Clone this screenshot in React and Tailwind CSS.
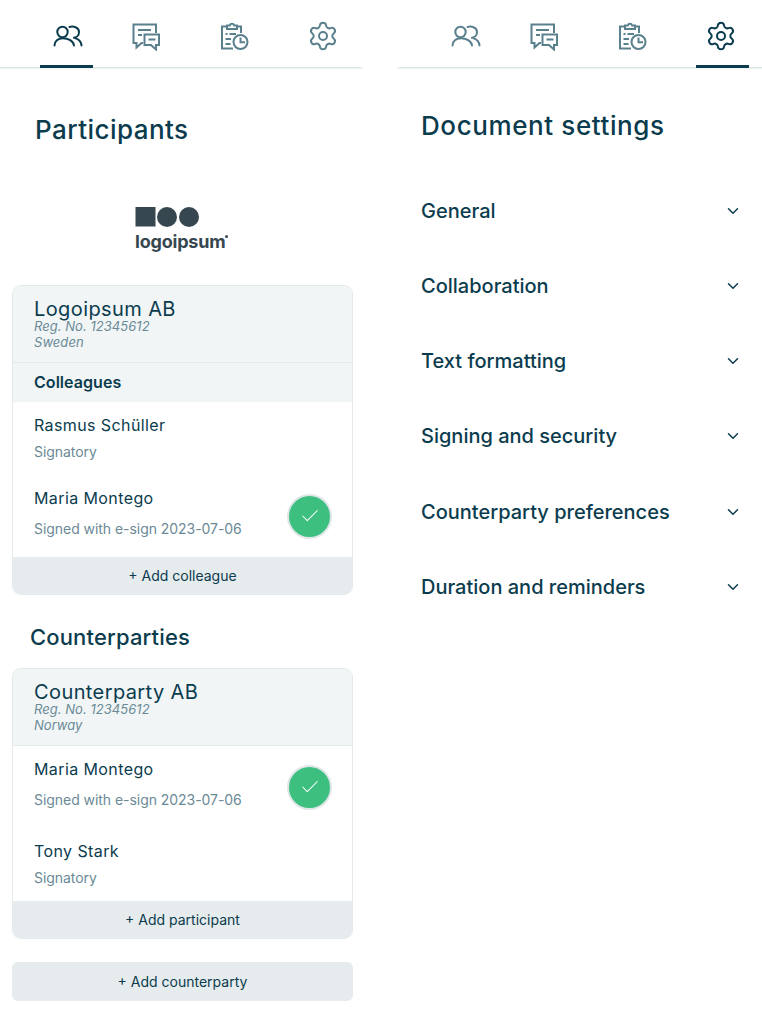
import React from 'react';
import { Settings, ChevronDown, Check } from 'lucide-react';

function PeopleIcon() {
  return (
    <svg width="30" height="24" viewBox="0 0 30 24" fill="none" stroke="currentColor" strokeWidth="2" strokeLinecap="round">
      <circle cx="9.5" cy="8" r="5.2" />
      <path d="M1.5 21.5C1.5 17 5 14.2 10 14.2S20.5 17 21 21.5" />
      <path d="M16.5 3C20 2 26 3 26 8c0 3.6-2.6 5.6-5 5.8" />
      <path d="M22.5 14.4c3.6 1 5.6 3.6 6 7" />
    </svg>
  );
}

function CommentsIcon() {
  return (
    <svg width="32" height="30" viewBox="0 0 32 30" fill="none" stroke="currentColor" strokeWidth="2">
      <path d="M26 12V3.5H3.5V22H6.5V26.5L11.5 22H13" />
      <path d="M8 9H21M8 14H12" />
      <path d="M14.5 13.5H29V24H26V28.5L21 24H14.5Z" />
      <path d="M18.5 18.5H25.5" />
    </svg>
  );
}

function ClipboardIcon() {
  return (
    <svg width="34" height="32" viewBox="0 0 34 32" fill="none" stroke="currentColor" strokeWidth="2">
      <path d="M10 6.5H5V28.5H16" />
      <path d="M20 6.5H24V13" />
      <path d="M10 9H20V5.5H17.2A2.3 2.3 0 0 0 12.8 5.5H10Z" />
      <circle cx="23.5" cy="22" r="7" />
      <path d="M23.5 17.5V22.3H28" />
      <path d="M8.5 14H10.5M12.5 14H19M8.5 19H14M8.5 24H13.5" />
    </svg>
  );
}

function Tabs({ active, lastMargin, gearClass }) {
  const tabs = [
    { icon: <PeopleIcon />, className: 'ml-[40px] pl-[2px]' },
    { icon: <CommentsIcon />, className: 'ml-[26px]' },
    { icon: <ClipboardIcon />, className: 'ml-[35px]' },
    { icon: <Settings size={32} strokeWidth={1.5} />, className: `${lastMargin} ${gearClass}` },
  ];
  return (
    <div className="flex h-[68px] border-b border-[#dfe6e8] shadow-[0_1px_1px_rgba(11,60,78,0.06)]">
      {tabs.map((tab, i) => (
        <div
          key={i}
          className={`flex h-[68px] w-[53px] items-center justify-center border-b-[3px] pt-[7px] ${tab.className} ${
            active === i ? 'border-[#0b3c4e] text-[#0b3c4e]' : 'border-transparent text-[#5a7f8d]'
          }`}
        >
          {tab.icon}
        </div>
      ))}
    </div>
  );
}

function Person({ name, note, signed }) {
  return (
    <div className={`flex items-center justify-between pl-[21px] pr-[20px] ${signed ? 'h-[82px]' : 'h-[73px]'}`}>
      <div className="mb-[2px]">
        <div className="text-[16px] leading-[24px] tracking-[0.4px] text-[#0b3c4e]">{name}</div>
        <div className={`text-[14px] leading-[20px] tracking-[-0.05px] text-[#6b8a97] ${signed ? 'mt-[9px] mb-[5px]' : 'mt-[5px]'}`}>{note}</div>
      </div>
      {signed && (
        <div className="flex h-[45px] w-[45px] items-center justify-center rounded-full border-[2px] border-[#dfe6e8] bg-[#3dbf80]">
          <Check size={22} strokeWidth={1.15} className="text-white" />
        </div>
      )}
    </div>
  );
}

function CompanyCard({ name, reg, country, band, people, addLabel }) {
  return (
    <div className="mx-[12px] w-[341px] overflow-hidden rounded-[9px] border border-[#e4eaec]">
      <div className="h-[77px] border-b border-[#e4eaec] bg-[#f1f5f6] pl-[21px] pt-[13px]">
        <div className="text-[20px] leading-[20px] tracking-[0.4px] text-[#0b3c4e]">{name}</div>
        <div className="text-[13px] leading-[14px] italic tracking-[0.05px] text-[#6b8a97]">{reg}</div>
        <div className="mt-[1px] text-[13px] leading-[16px] italic tracking-[0.05px] text-[#6b8a97]">{country}</div>
      </div>
      {band && (
        <div className="flex h-[39px] items-center bg-[#f1f5f6] pb-[2px] pl-[21px] text-[16px] font-semibold tracking-[0.05px] text-[#0b3c4e]">{band}</div>
      )}
      {people.map((p) => (
        <Person key={p.name} {...p} />
      ))}
      <div className="flex h-[37px] items-center justify-center bg-[#e6ebed] text-[14px] text-[#0b3c4e]">{addLabel}</div>
    </div>
  );
}

function ParticipantsPanel() {
  return (
    <div className="w-[362px] shrink-0">
      <Tabs active={0} lastMargin="ml-[36px]" gearClass="" />
      <h1 className="ml-[35px] mt-[45px] text-[26px] leading-[34px] font-medium tracking-[0.45px] text-[#0b3c4e]">Participants</h1>
      <div className="mt-[60px] ml-[135px] h-[78px]">
        <svg width="66" height="20" viewBox="0 0 66 20" className="block" fill="#37474f">
          <rect x="0.5" y="0" width="20" height="19.5" />
          <circle cx="32" cy="10" r="10" />
          <circle cx="54" cy="10" r="10" />
        </svg>
        <div className="mt-[3px] flex items-start text-[18px] leading-[24px] font-bold tracking-[-0.2px] text-[#37474f]">
          logoipsum
          <span className="ml-[0px] mt-[5px] h-[3px] w-[3px] rounded-full bg-[#37474f]" />
        </div>
      </div>
      <CompanyCard
        name="Logoipsum AB"
        reg="Reg. No. 12345612"
        country="Sweden"
        band="Colleagues"
        addLabel="+ Add colleague"
        people={[
          { name: 'Rasmus Schüller', note: 'Signatory' },
          { name: 'Maria Montego', note: 'Signed with e-sign 2023-07-06', signed: true },
        ]}
      />
      <h2 className="ml-[30px] mt-[27px] text-[22px] leading-[30px] font-medium tracking-[0.15px] text-[#0b3c4e]">Counterparties</h2>
      <div className="mt-[16px]">
        <CompanyCard
          name="Counterparty AB"
          reg="Reg. No. 12345612"
          country="Norway"
          addLabel="+ Add participant"
          people={[
            { name: 'Maria Montego', note: 'Signed with e-sign 2023-07-06', signed: true },
            { name: 'Tony Stark', note: 'Signatory' },
          ]}
        />
      </div>
      <div className="mx-[12px] mt-[23px] flex h-[39px] w-[341px] items-center justify-center rounded-[6px] bg-[#e6ebed] text-[14px] text-[#0b3c4e]">
        + Add counterparty
      </div>
    </div>
  );
}

const sections = [
  'General',
  'Collaboration',
  'Text formatting',
  'Signing and security',
  'Counterparty preferences',
  'Duration and reminders',
];

function SettingsPanel() {
  return (
    <div className="ml-[36px] w-[364px] shrink-0">
      <Tabs active={3} lastMargin="ml-[38px]" gearClass="pr-[3px]" />
      <h1 className="ml-[23px] mt-[41px] text-[26px] leading-[34px] font-medium tracking-[0.6px] text-[#0b3c4e]">Document settings</h1>
      <div className="mt-[30px]">
        {sections.map((s) => (
          <div key={s} className="flex h-[75.25px] items-center justify-between pl-[23px] pr-[20px] text-[20px] font-medium text-[#0b3c4e]">
            <span>{s}</span>
            <ChevronDown size={18} strokeWidth={2} />
          </div>
        ))}
      </div>
    </div>
  );
}

export default function App() {
  return (
    <div className="flex h-[1024px] w-[762px] overflow-hidden bg-white font-[Inter,sans-serif]">
      <ParticipantsPanel />
      <SettingsPanel />
    </div>
  );
}
